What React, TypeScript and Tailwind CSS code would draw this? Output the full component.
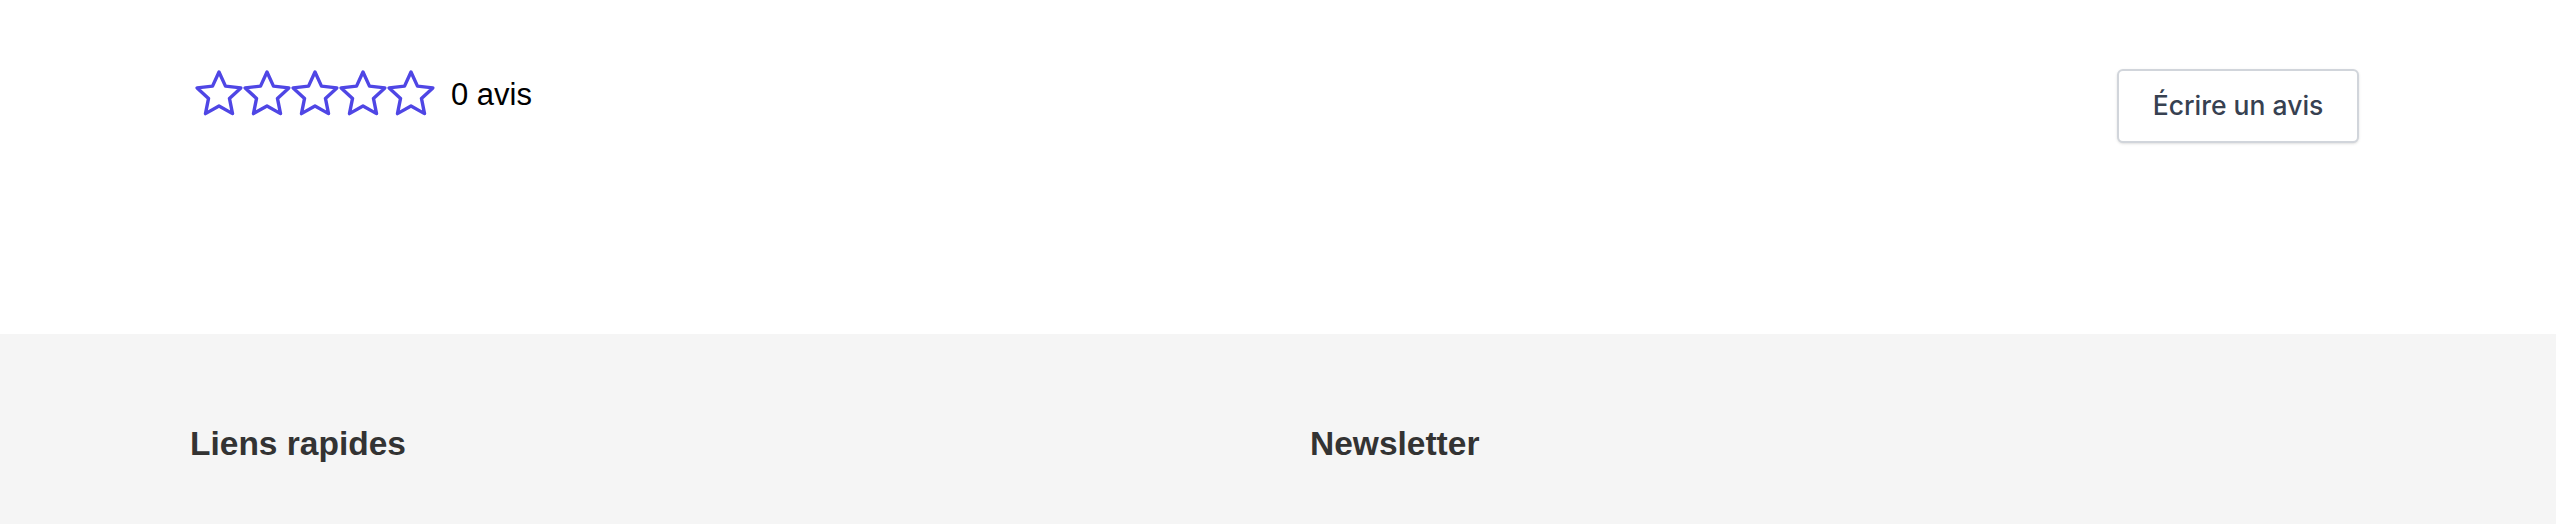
import React from "react";

function Star() {
  return (
    <svg width="48" height="48" viewBox="0 0 48 48" fill="none" className="block shrink-0">
      <polygon
        points="24,3 30.47,17.1 45.87,18.89 34.46,29.4 37.52,44.61 24,37 10.48,44.61 13.54,29.4 2.13,18.89 17.53,17.1"
        stroke="#4f46e5"
        strokeWidth="3.4"
        strokeLinejoin="round"
      />
    </svg>
  );
}

export default function App() {
  return (
    <div className="w-full min-h-[524px] bg-white">
      <section className="h-[334px] bg-white">
        <div className="mx-auto w-[2176px] flex justify-between items-start pt-[69px]">
          <div className="flex items-start ml-[5px]">
            <div className="flex">
              <Star />
              <Star />
              <Star />
              <Star />
              <Star />
            </div>
            <span
              className="ml-[16px] mt-[2px] text-[31px] leading-[48px] text-black"
              style={{ fontFamily: '"Liberation Sans", Arial, sans-serif' }}
            >
              0 avis
            </span>
          </div>
          <button
            className="mr-[7px] w-[242px] h-[74px] flex items-center justify-center rounded-[6px] border-2 border-[#d1d5db] bg-white text-[26.5px] font-medium text-[#374151] shadow-sm"
            style={{ fontFamily: 'Inter, "Noto Sans", sans-serif' }}
          >
            Écrire un avis
          </button>
        </div>
      </section>
      <footer className="bg-[#f5f5f5] h-[190px]">
        <div
          className="mx-auto w-[2176px] grid grid-cols-2 gap-16 pt-[90px]"
          style={{ fontFamily: '"Liberation Sans", Arial, sans-serif' }}
        >
          <h3 className="text-[33.5px] leading-[40px] font-bold text-[#333333]">Liens rapides</h3>
          <h3 className="text-[33.5px] leading-[40px] font-bold text-[#333333]">Newsletter</h3>
        </div>
      </footer>
    </div>
  );
}
